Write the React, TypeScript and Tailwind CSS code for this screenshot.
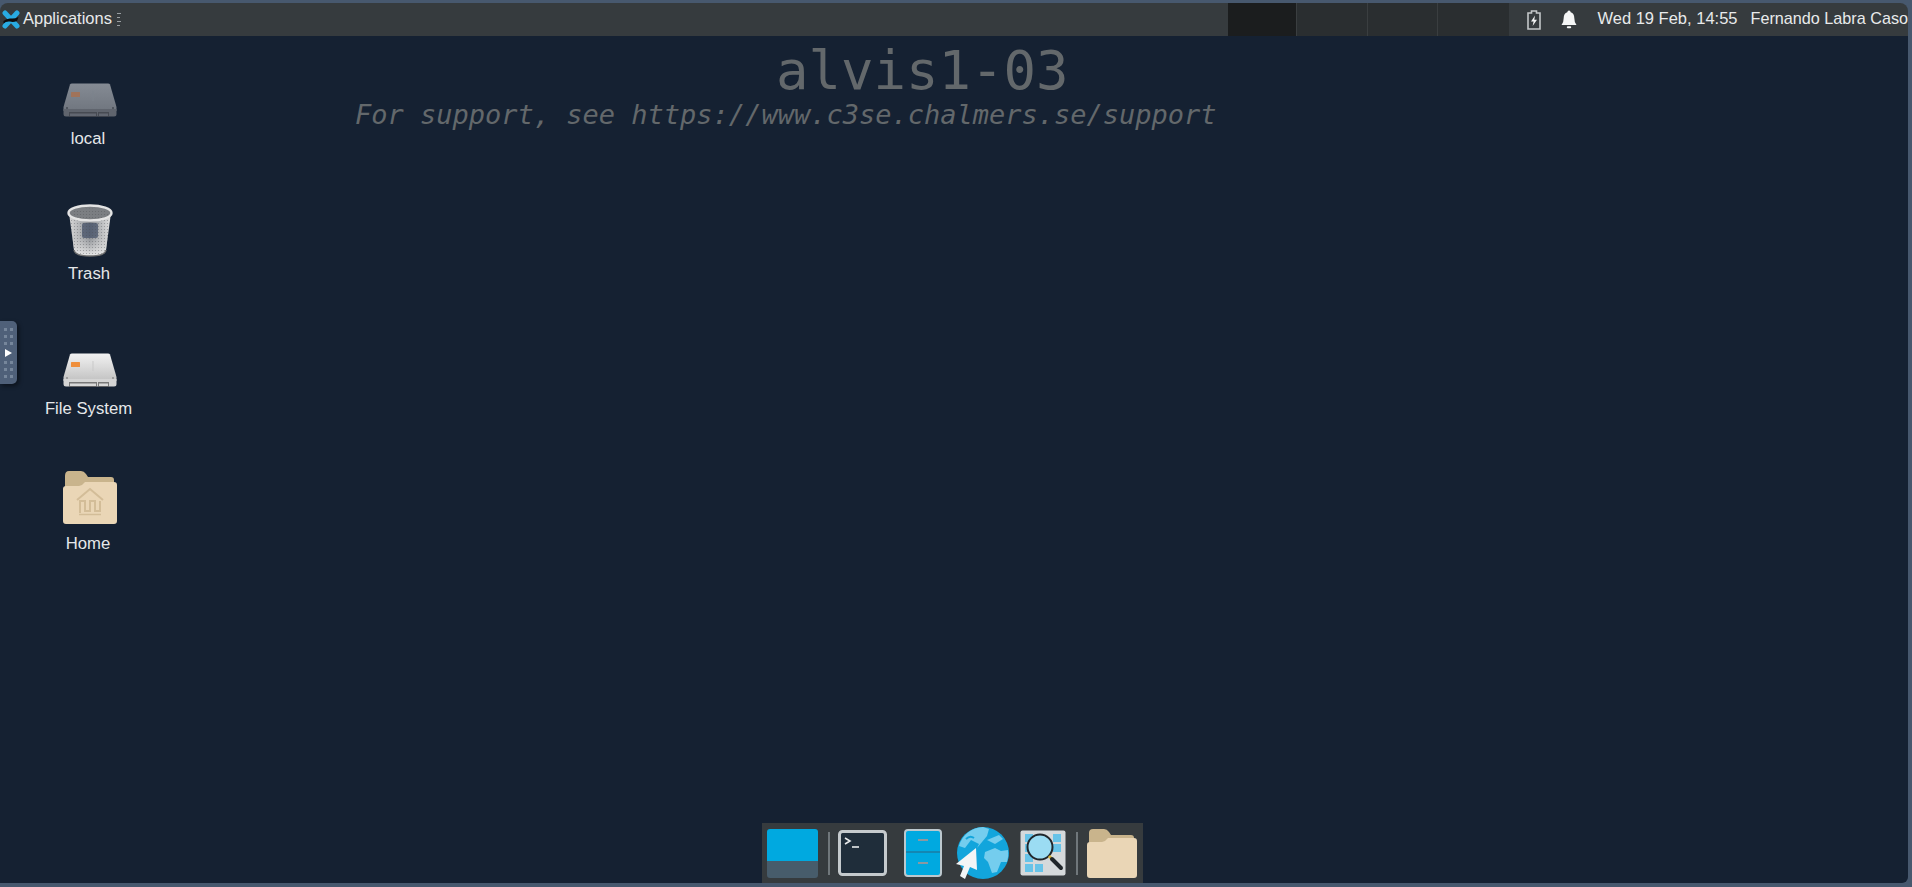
import React from "react";

const sans = "font-['Liberation_Sans',Arial,sans-serif]";

function DriveIcon({ light = false }: { light?: boolean }) {
  const id = light ? "fs" : "loc";
  return (
    <svg width="54" height="35" viewBox="0 0 54 35">
      <defs>
        <linearGradient id={id} x1="0" y1="0" x2="0" y2="1">
          <stop offset="0" stopColor={light ? "#f2f2f2" : "#858b94"} />
          <stop offset="1" stopColor={light ? "#c2c2c2" : "#70767f"} />
        </linearGradient>
      </defs>
      <path d="M7 1.5 Q7.5 0.5 9 0.5 H45 Q46.5 0.5 47 1.5 L53.5 24 V28 H0.5 V24 Z" fill={`url(#${id})`} />
      <path d="M0.5 26 H53.5 V31 Q53.5 33.5 51 33.5 H3 Q0.5 33.5 0.5 31 Z" fill={light ? "#d4d4d4" : "#5f646d"} />
      <rect x="8" y="9" width="9" height="5" rx="0.5" fill={light ? "#ef8f3c" : "#a0735a"} />
      <path d="M30 8 V18" stroke={light ? "#c9c9c9" : "#7d838c"} strokeWidth="1" />
      <path d="M6 29 H34 V34 H6 Z M35 29 H46 V34 H35 Z" fill={light ? "#5a5a5a" : "#3d424a"} opacity="0.75" />
      <path d="M7 30.5 H33 V33 H7 Z M36 30.5 H45 V33 H36 Z" fill={light ? "#d8d8d8" : "#626771"} />
      <circle cx="4" cy="25" r="1" fill={light ? "#8f8f8f" : "#464b53"} />
      <circle cx="50" cy="25" r="1" fill={light ? "#8f8f8f" : "#464b53"} />
    </svg>
  );
}

function TrashIcon() {
  return (
    <svg width="46" height="54" viewBox="0 0 46 54" className="-mb-[5px]">
      <defs>
        <linearGradient id="bin" x1="0" y1="0" x2="1" y2="0">
          <stop offset="0" stopColor="#d8d8d8" />
          <stop offset="0.28" stopColor="#b0b2b5" />
          <stop offset="0.5" stopColor="#84888e" />
          <stop offset="0.72" stopColor="#b4b6b9" />
          <stop offset="1" stopColor="#e0e0e0" />
        </linearGradient>
        <linearGradient id="binFoot" x1="0" y1="0" x2="0" y2="1">
          <stop offset="0" stopColor="#c6c6c6" stopOpacity="0" />
          <stop offset="1" stopColor="#ececec" />
        </linearGradient>
        <pattern id="mesh" width="3" height="3" patternUnits="userSpaceOnUse">
          <circle cx="1.5" cy="1.5" r="0.6" fill="#4a4d52" opacity="0.45" />
        </pattern>
      </defs>
      <path d="M2 9 L7 46 Q8 52 23 52 Q38 52 39 46 L44 9 Z" fill="url(#bin)" />
      <path d="M5 30 L7 46 Q8 52 23 52 Q38 52 39 46 L41 30 Z" fill="url(#binFoot)" />
      <rect x="15" y="19" width="16" height="15" rx="2" fill="#47536a" opacity="0.75" />
      <path d="M2 9 L7 46 Q8 52 23 52 Q38 52 39 46 L44 9 Z" fill="url(#mesh)" />
      <ellipse cx="23" cy="9" rx="21.5" ry="7.5" fill="#7b7e82" />
      <ellipse cx="23" cy="10" rx="18.5" ry="5.5" fill="url(#mesh)" />
      <ellipse cx="23" cy="9" rx="21.5" ry="7.5" fill="none" stroke="#e4e4e4" strokeWidth="2.4" />
      <path d="M7 46 Q8 52 23 52 Q38 52 39 46" fill="none" stroke="#6f6f6f" strokeWidth="1.5" />
    </svg>
  );
}

function HomeIcon() {
  return (
    <svg width="56" height="55" viewBox="0 0 56 55" className="-mb-[2px]">
      <path d="M3 6 Q3 1 7 1 H19 Q22 1 24 4 L26 7 H49 Q52 7 52 10 V24 H3 Z" fill="#c9b48c" />
      <path d="M1 19 Q1 16 4 16 H17 Q20 16 22 13 L23 12 H52 Q55 12 55 15 V51 Q55 54 52 54 H4 Q1 54 1 51 Z" fill="#ead6b6" />
      <path d="M15 30 L28 19 L41 30" fill="none" stroke="#d3bd98" strokeWidth="2" />
      <path d="M18 43 V31 H23 V41 H28 V31 H33 V41 H38 V31" fill="none" stroke="#d3bd98" strokeWidth="2" />
      <path d="M17 44.5 H39" stroke="#d3bd98" strokeWidth="1.5" />
    </svg>
  );
}

function DesktopIcon({ label, icon, nudge = "" }: { label: string; icon: React.ReactNode; nudge?: string }) {
  return (
    <div className="flex h-[135px] w-[130px] flex-col items-center">
      <div className="flex h-[60px] items-end pl-[4px]">{icon}</div>
      <span className={`${sans} mt-[11px] text-[16.7px] leading-[20px] text-[#e6e8ea] ${nudge}`}>{label}</span>
    </div>
  );
}

function XfceMark() {
  return (
    <svg width="18" height="19" viewBox="0 0 18 19" className="ml-[2px] shrink-0">
      <path d="M3 3 L15 16 M15 3 L3 16" stroke="#29abe2" strokeWidth="5" strokeLinecap="round" />
      <path d="M1.5 11 Q5 8 9 8.5 Q13 9 16.5 7 L15 11 Q11 12.5 8 11.5 Q4 11 1.5 13.5 Z" fill="#0d0d0d" />
    </svg>
  );
}

function DockSep({ className }: { className: string }) {
  return <div className={`h-[43px] w-[2px] bg-[#70777b] ${className}`} />;
}

function HandleDots() {
  return (
    <div className="flex gap-[3px]">
      <div className="h-[3px] w-[3px] bg-[#76869b]" />
      <div className="h-[3px] w-[3px] bg-[#76869b]" />
    </div>
  );
}

export default function App() {
  return (
    <div className="flex h-[887px] w-[1912px] flex-col overflow-hidden bg-[#47586e] pb-[4px] pr-[4px] pt-[3px]">
      {/* panel */}
      <div className="flex h-[33px] shrink-0 items-center rounded-t-[8px] bg-[#363b3e] text-[#e8eaeb]">
        <XfceMark />
        <span className={`${sans} ml-[3px] pb-[2px] text-[16.5px]`}>Applications</span>
        <div className="ml-[5px] flex flex-col gap-[3px]">
          <div className="h-[1px] w-[4px] bg-[#9a9fa2]" />
          <div className="h-[1px] w-[3px] bg-[#9a9fa2]" />
          <div className="h-[1px] w-[4px] bg-[#9a9fa2]" />
          <div className="h-[1px] w-[3px] bg-[#9a9fa2]" />
        </div>
        <div className="ml-auto flex h-full">
          <div className="w-[68px] bg-[#1b1d1e]" />
          <div className="w-[71px] border-l border-[#3a3e40] bg-[#2a2e30]" />
          <div className="w-[70px] border-l border-[#3a3e40] bg-[#2a2e30]" />
          <div className="w-[72px] border-l border-[#3a3e40] bg-[#2a2e30]" />
        </div>
        <svg width="14" height="20" viewBox="0 0 14 20" className="ml-[18px]">
          <path d="M4.5 1 H9.5 V3 H13 V19 H1 V3 H4.5 Z" fill="none" stroke="#c4c7c9" strokeWidth="1.6" />
          <path d="M8 5.5 L4 11.5 H6.6 L5.6 16 L10 9.8 H7.3 Z" fill="#f2f3f3" />
        </svg>
        <svg width="16" height="19" viewBox="0 0 16 19" className="ml-[20px]">
          <path d="M8 0.5 Q9.5 0.5 9.7 2.2 Q13.3 3.2 13.3 8 Q13.3 12.5 15.5 15 H0.5 Q2.7 12.5 2.7 8 Q2.7 3.2 6.3 2.2 Q6.5 0.5 8 0.5 Z" fill="#f5f6f6" />
          <rect x="5.8" y="16.3" width="4.4" height="2" rx="1" fill="#f5f6f6" />
        </svg>
        <span className={`${sans} ml-[20px] whitespace-nowrap pb-[2px] text-[16.5px]`}>Wed 19 Feb, 14:55</span>
        <span className={`${sans} ml-[13px] whitespace-nowrap pb-[2px] text-[16.2px]`}>Fernando Labra Caso</span>
      </div>

      {/* desktop */}
      <div className="relative flex min-h-0 flex-1 flex-col rounded-br-[6px] bg-[#152132]">
        <div className="flex min-h-0 flex-1">
          <div className="ml-[23px] flex shrink-0 flex-col pt-[22px]">
            <DesktopIcon label="local" icon={<DriveIcon />} />
            <DesktopIcon label="Trash" icon={<TrashIcon />} nudge="ml-[2px]" />
            <DesktopIcon label="File System" icon={<DriveIcon light />} nudge="ml-[1px]" />
            <DesktopIcon label="Home" icon={<HomeIcon />} />
          </div>
          <div className="font-['DejaVu_Sans_Mono',monospace] text-[#63686b]">
            <div className="ml-[623px] mt-[8px] whitespace-nowrap text-[54px] leading-[54px]">alvis1-03</div>
            <div className="ml-[202px] whitespace-nowrap text-[27px] italic leading-[34px]">For support, see https://www.c3se.chalmers.se/support</div>
          </div>
        </div>

        {/* dock */}
        <div className="flex justify-center pr-[3px]">
          <div className="flex h-[60px] w-[381px] items-center bg-[#363b3e]">
            <div className="ml-[5px] flex h-[49px] w-[51px] flex-col overflow-hidden rounded-[3px]">
              <div className="h-[32px] bg-[#00a9e0]" />
              <div className="flex-1 bg-[#475c6b]" />
            </div>
            <DockSep className="ml-[10px]" />
            <svg width="49" height="46" viewBox="0 0 49 46" className="ml-[8px]">
              <rect x="1.5" y="1.5" width="46" height="43" rx="3" fill="#1f2d3a" stroke="#c5cacd" strokeWidth="3" />
              <path d="M7 8 L12 11 L7 14" fill="none" stroke="#e8eaeb" strokeWidth="1.6" />
              <path d="M14 17 H21" stroke="#e8eaeb" strokeWidth="1.6" />
            </svg>
            <svg width="38" height="48" viewBox="0 0 38 48" className="ml-[17px]">
              <rect x="1" y="1" width="36" height="46" rx="3" fill="#00a9e0" stroke="#bcc8ce" strokeWidth="2" />
              <path d="M2 23 H36" stroke="#1487b2" strokeWidth="2" />
              <path d="M14 11 H24 M14 34 H24" stroke="#8b98a0" strokeWidth="2" />
            </svg>
            <svg width="52" height="54" viewBox="0 0 52 54" className="ml-[15px] overflow-visible">
              <circle cx="26" cy="27" r="26" fill="#12a5dc" />
              <path d="M26 1 A26 26 0 0 0 2 20 L8 22 L14 14 L22 18 L20 22 L30 10 L32 3 Z" fill="#74cdee" />
              <path d="M9 13 Q13 9 17 12" fill="none" stroke="#12a5dc" strokeWidth="2" />
              <path d="M30 14 L42 9 L46 13 L38 18 Z" fill="#74cdee" />
              <path d="M28 26 L38 22 L44 25 L51 24 Q52 30 50 36 L44 36 L40 46 L35 47 L31 36 L27 32 Z" fill="#74cdee" />
              <path d="M19 22 L20 44 L13 41 L8 53 L3 50 L7 40 L-1 38 Z" fill="#f3f5f6" />
            </svg>
            <svg width="46" height="46" viewBox="0 0 46 46" className="ml-[11px]">
              <rect x="0.5" y="0.5" width="45" height="45" rx="2" fill="#d5d9db" />
              <g fill="#67c3e8">
                <rect x="5" y="4" width="8" height="8" />
                <rect x="33" y="4" width="8" height="8" />
                <rect x="33" y="14" width="8" height="8" />
                <rect x="5" y="14" width="8" height="8" />
                <rect x="5" y="24" width="8" height="8" />
                <rect x="5" y="34" width="8" height="8" />
                <rect x="15" y="34" width="8" height="8" />
              </g>
              <circle cx="20" cy="17" r="12.5" fill="#9bdcf3" stroke="#20262b" strokeWidth="2" />
              <path d="M29 26 L32 29" stroke="#d9b53c" strokeWidth="3" />
              <path d="M32 29 L41 38" stroke="#20262b" strokeWidth="4" strokeLinecap="round" />
            </svg>
            <DockSep className="ml-[10px]" />
            <svg width="50" height="50" viewBox="0 0 50 50" className="ml-[9px]">
              <path d="M2 5 Q2 1 6 1 H17 Q20 1 22 4 L24 7 H44 Q47 7 47 10 V22 H2 Z" fill="#c9b48c" />
              <path d="M0 17 Q0 14 3 14 H15 Q18 14 20 11 L21 10 H47 Q50 10 50 13 V47 Q50 50 47 50 H3 Q0 50 0 47 Z" fill="#ead6b6" />
            </svg>
          </div>
        </div>

        {/* side panel handle */}
        <div className="absolute left-0 top-[285px] flex h-[63px] w-[17px] flex-col items-center justify-center gap-[4px] rounded-r-[5px] bg-[#4f6079] shadow-[2px_2px_4px_rgba(0,0,0,0.45)]">
          <HandleDots />
          <HandleDots />
          <HandleDots />
          <div className="h-0 w-0 border-y-[4px] border-l-[7px] border-y-transparent border-l-white" />
          <HandleDots />
          <HandleDots />
          <HandleDots />
        </div>
      </div>
    </div>
  );
}
